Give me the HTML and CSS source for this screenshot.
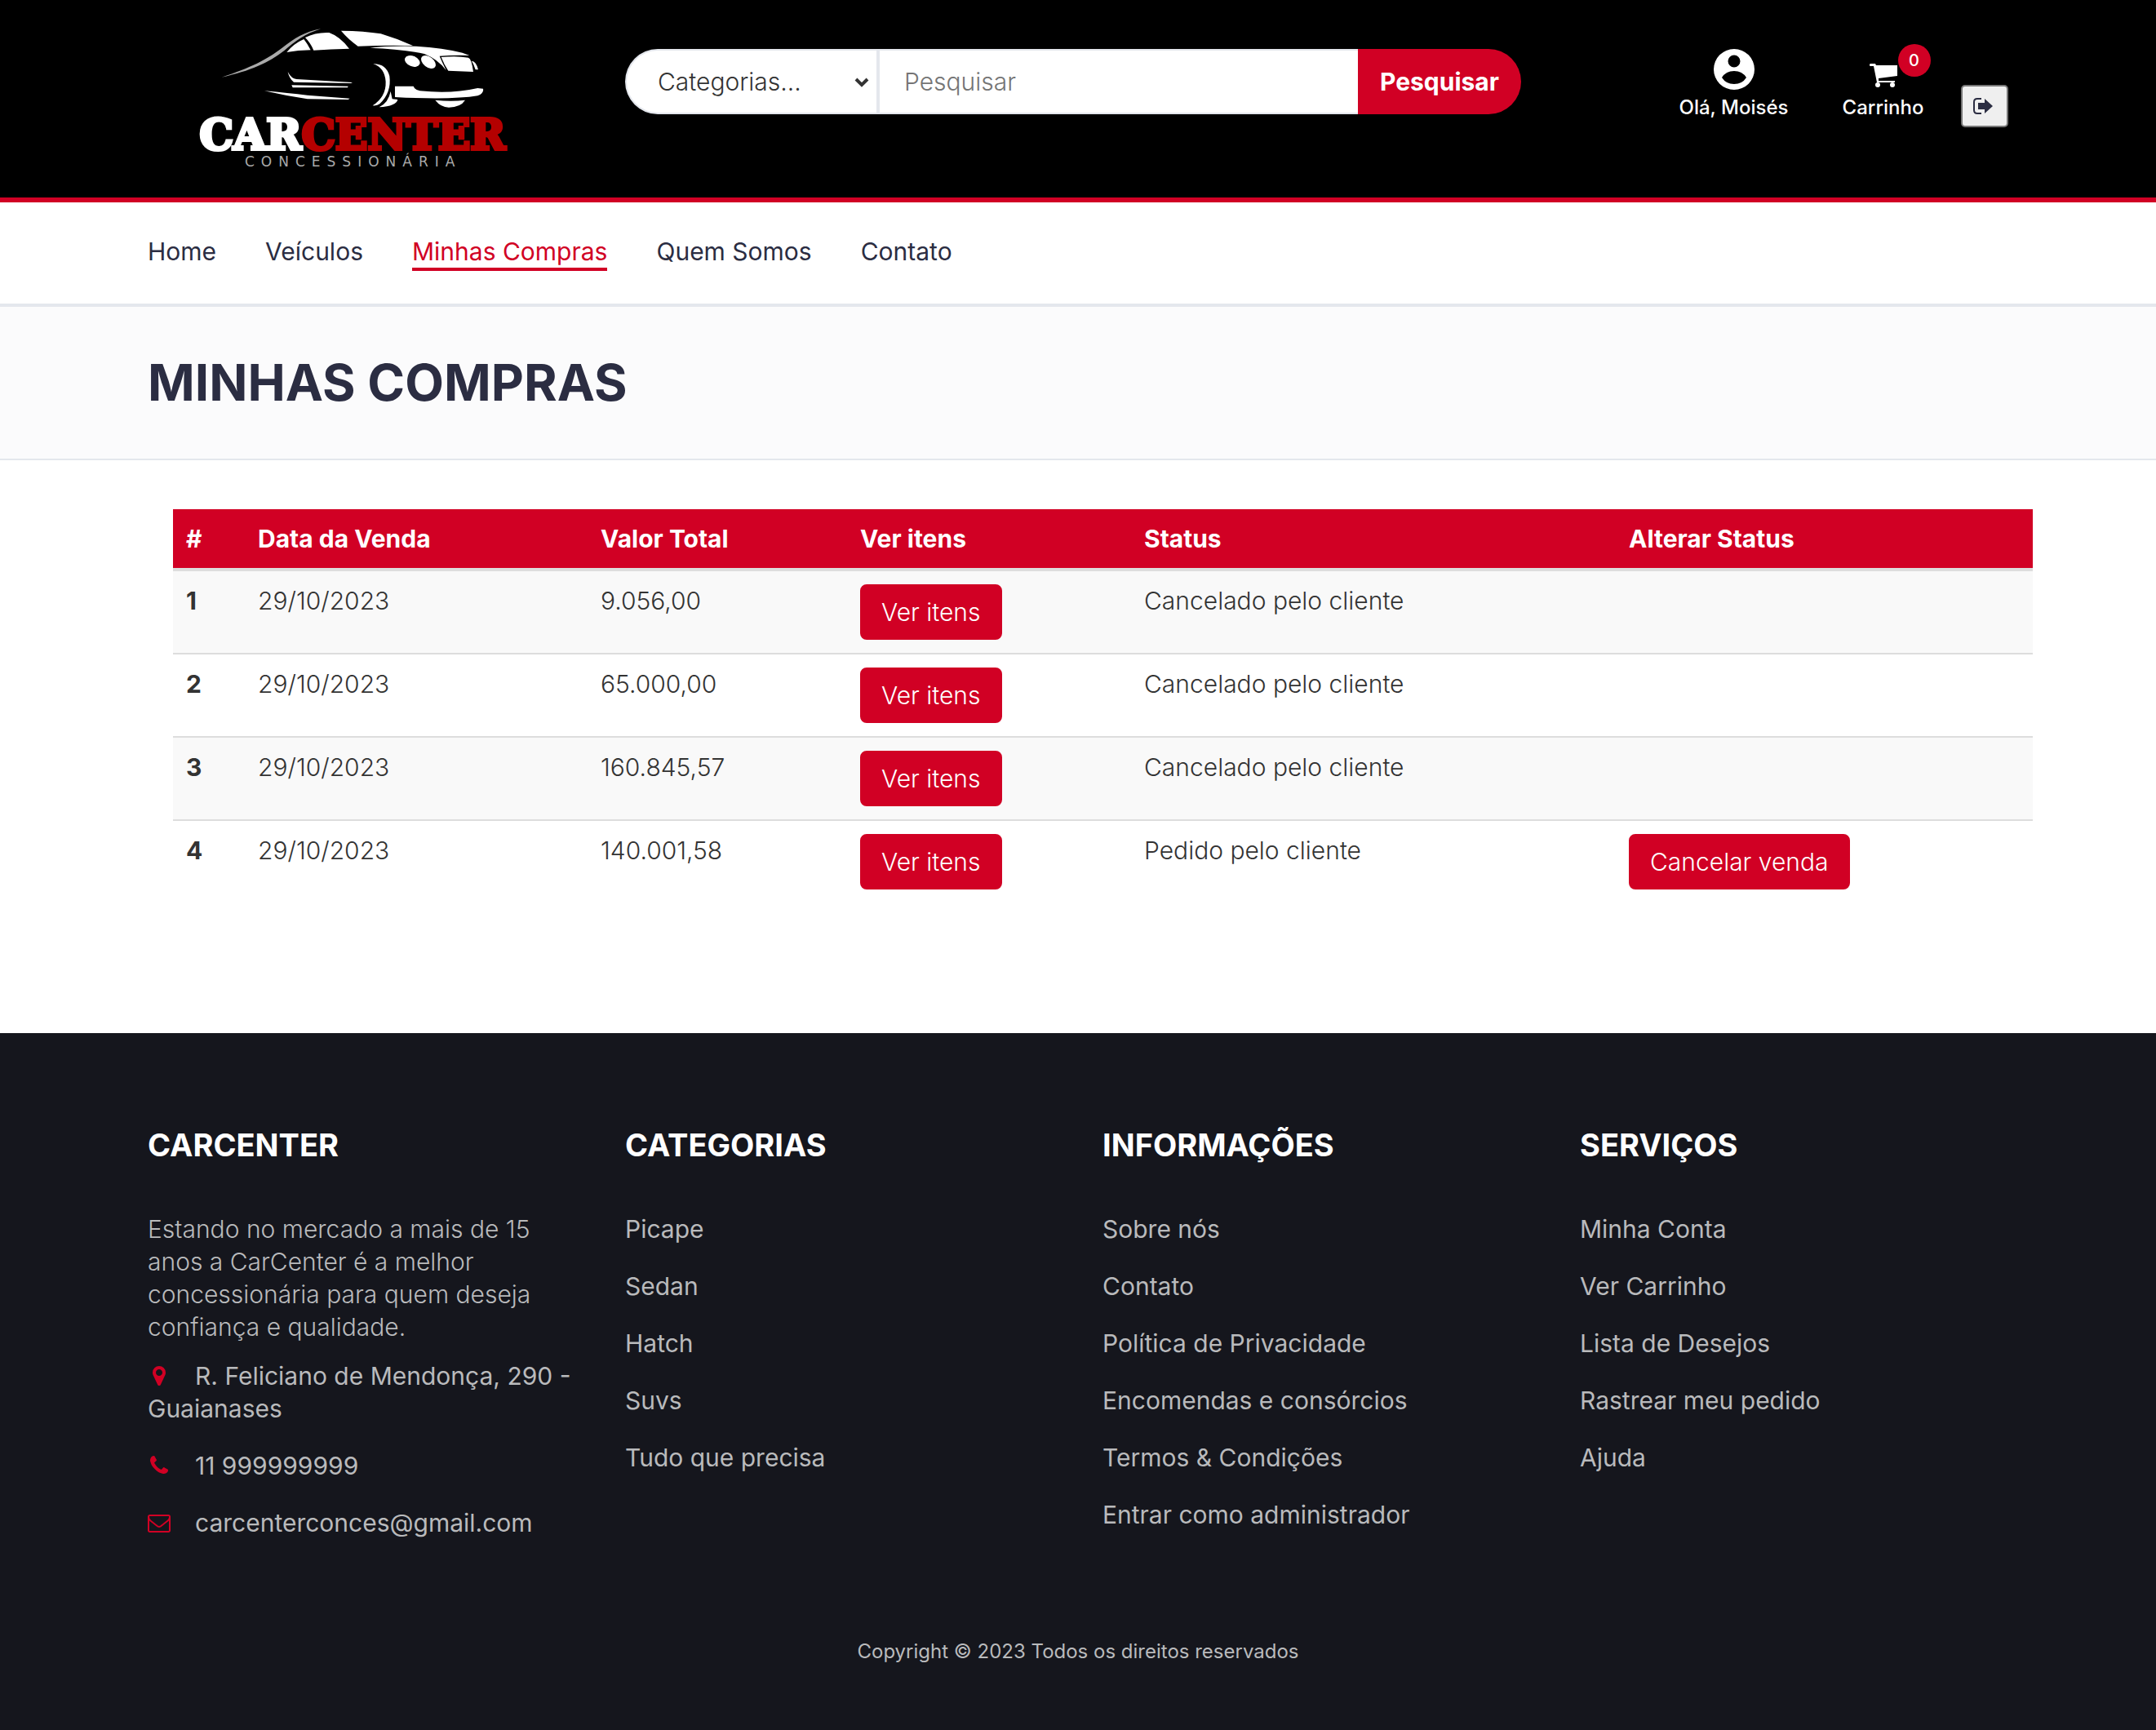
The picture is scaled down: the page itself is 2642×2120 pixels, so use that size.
FILE: index.html
```html
<!DOCTYPE html>
<html lang="pt-br">
<head>
<meta charset="utf-8">
<title>CarCenter - Minhas Compras</title>
<link rel="stylesheet" href="styles.css">
</head>
<body>
<header class="header">
  <div class="container header-grid">
    <a class="logo" href="#" aria-label="CarCenter Concessionária">
      <svg width="430" height="220" viewBox="220 20 430 220">
        <g transform="translate(220 20) scale(.3333)" fill="#fff">
          <path d="M155 224C260 190 320 160 375 118C420 82 460 56 520 46C462 64 425 92 385 126C325 172 262 200 155 224Z" fill="#aaa"/>
          <path d="M394 132Q420 100 457 84Q470 100 482 124Q436 124 394 132ZM462 78Q500 58 550 60Q590 74 624 119Q555 120 493 125Q482 98 462 78ZM594 53Q680 54 740 64Q800 82 858 108Q750 106 656 110Q620 84 594 53Z"/>
          <path d="M700 116Q760 108 870 110Q970 116 1040 134L1066 144Q1010 142 956 146Q966 170 980 198Q950 158 900 138Q820 120 700 116ZM1074 164Q1090 164 1098 196L1088 196Q1082 176 1074 164Z"/>
          <path d="M962 150Q1020 144 1062 152Q1074 156 1080 204L988 200Q974 180 962 150Z"/>
          <ellipse cx="856" cy="165" rx="29" ry="19" transform="rotate(22 856 165)"/>
          <ellipse cx="915" cy="168" rx="31" ry="19" transform="rotate(38 915 168)"/>
          <path d="M398 204Q412 230 430 231L636 243L630 246L420 242Q404 230 398 204ZM412 253L620 257L618 262L416 262ZM312 274Q400 282 470 290L626 302L620 306L470 304Q390 292 312 274Z"/>
          <path d="M712 175Q760 174 772 220Q780 280 736 322Q726 330 710 328Q760 296 758 240Q754 188 712 175ZM776 276L782 304L802 306Q798 330 734 334Q768 318 776 276Z"/>
          <path d="M792 257H860Q866 272 884 274Q1000 286 1096 264L1116 266Q1120 284 1096 292Q1000 308 792 297ZM940 308Q1000 314 1050 308Q1034 334 990 335Q960 334 940 308Z"/>
        </g>
        <text class="logo-name" x="432" y="183" text-anchor="middle"><tspan class="logo-car">CAR</tspan><tspan class="logo-center">CENTER</tspan></text>
        <text class="logo-tag" x="300" y="204">CONCESSIONÁRIA</text>
      </svg>
    </a>
    <form class="search">
      <span class="select-wrap">
        <select class="search-select" aria-label="Categorias">
          <option>Categorias...</option>
        </select>
        <svg class="chevron" width="18" height="12" viewBox="0 0 18 12"><path d="M2 2l7 7 7-7" fill="none" stroke="#333" stroke-width="4"/></svg>
      </span>
      <input class="search-input" type="text" placeholder="Pesquisar" aria-label="Pesquisar">
      <button class="search-btn" type="submit">Pesquisar</button>
    </form>
    <div class="account">
      <a class="account-item" href="#">
        <svg width="50" height="50" viewBox="0 0 50 50"><path fill="#fff" fill-rule="evenodd" d="M25 0a25 25 0 1 1 0 50a25 25 0 1 1 0-50zM25 7.500a7.500 7.500 0 1 0 0 15a7.500 7.500 0 1 0 0-15zM10 35Q15 43 25 43T40 35Q35 27 25 27T10 35z"/></svg>
        <span>Olá, Moisés</span>
      </a>
      <a class="account-item" href="#">
        <span class="cart-icon">
          <svg width="34" height="30" viewBox="0 0 34 30" fill="#fff"><path d="M1 0H7L8 2H34V15L11 18V21H31V23H9L5 3H1Q0 3 0 1.500T1 0z"/><circle cx="10" cy="26" r="3"/><circle cx="28" cy="26" r="3"/></svg>
          <span class="badge">0</span>
        </span>
        <span>Carrinho</span>
      </a>
      <button class="logout" type="button" aria-label="Sair">
        <svg width="26" height="20" viewBox="0 0 26 20"><path d="M11 1H6Q2 1 2 5V15Q2 19 6 19H11" fill="none" stroke="#2b2d42" stroke-width="2"/><path d="M7 6h8V1l10 9-10 9v-5H7z" fill="#2b2d42"/></svg>
      </button>
    </div>
  </div>
</header>

<nav class="nav">
  <div class="container nav-list">
    <a href="#">Home</a>
    <a href="#">Veículos</a>
    <a class="active" href="#">Minhas Compras</a>
    <a href="#">Quem Somos</a>
    <a href="#">Contato</a>
  </div>
</nav>

<section class="page-head">
  <div class="container"><h1>MINHAS COMPRAS</h1></div>
</section>

<main class="container main">
  <table class="orders">
    <colgroup><col class="c-id"><col class="c-date"><col class="c-total"><col class="c-items"><col class="c-status"><col></colgroup>
    <thead>
      <tr><th>#</th><th>Data da Venda</th><th>Valor Total</th><th>Ver itens</th><th>Status</th><th>Alterar Status</th></tr>
    </thead>
    <tbody>
      <tr><th>1</th><td>29/10/2023</td><td>9.056,00</td><td><button class="btn" type="button">Ver itens</button></td><td>Cancelado pelo cliente</td><td></td></tr>
      <tr><th>2</th><td>29/10/2023</td><td>65.000,00</td><td><button class="btn" type="button">Ver itens</button></td><td>Cancelado pelo cliente</td><td></td></tr>
      <tr><th>3</th><td>29/10/2023</td><td>160.845,57</td><td><button class="btn" type="button">Ver itens</button></td><td>Cancelado pelo cliente</td><td></td></tr>
      <tr><th>4</th><td>29/10/2023</td><td>140.001,58</td><td><button class="btn" type="button">Ver itens</button></td><td>Pedido pelo cliente</td><td><button class="btn" type="button">Cancelar venda</button></td></tr>
    </tbody>
  </table>
</main>

<footer class="footer">
  <div class="container footer-grid">
    <section>
      <h3>CARCENTER</h3>
      <p>Estando no mercado a mais de 15 anos a CarCenter é a melhor concessionária para quem deseja confiança e qualidade.</p>
      <ul class="links">
        <li><a href="#"><svg class="icon" viewBox="0 0 1792 1792"><path d="M1152 640q0-106-75-181t-181-75-181 75-75 181 75 181 181 75 181-75 75-181zm256 0q0 109-33 179l-364 774q-16 33-47.5 52t-67.500 19-67.500-19-46.500-52l-365-774q-33-70-33-179 0-212 150-362t362-150 362 150 150 362z"/></svg>R. Feliciano de Mendonça, 290 - Guaianases</a></li>
        <li><a href="#"><svg class="icon" viewBox="0 0 1792 1792"><path d="M1600 1240q0 27-10 70.500t-21 68.500q-21 50-122 106-94 51-186 51-27 0-53-3.500t-57.500-12.500-47-14.500-55.500-20.500-49-18q-98-35-175-83-127-79-264-216t-216-264q-48-77-83-175-3-9-18-49t-20.500-55.500-14.500-47-12.500-57.500-3.500-53q0-92 51-186 56-101 106-122 25-11 68.500-21t70.500-10q14 0 21 3 18 6 53 76 11 19 30 54t35 63.500 31 53.500q3 4 17.500 25t21.500 35.500 7 28.500q0 20-28.500 50t-62 55-62 53-28.500 46q0 9 5 22.500t8.500 20.500 14 24 11.500 19q76 137 174 235t235 174q2 1 19 11.500t24 14 20.500 8.500 22.500 5q18 0 46-28.500t53-62 55-62 50-28.500q14 0 28.500 7t35.500 21.500 25 17.500q25 15 53.500 31t63.500 35 54 30q70 35 76 53 3 7 3 21z"/></svg>11 999999999</a></li>
        <li><a href="#"><svg class="icon" viewBox="0 0 1792 1792"><path d="M1664 1504v-768q-32 36-69 66-268 206-426 338-51 43-83 67t-86.500 48.500-102.500 24.500h-2q-48 0-102.500-24.500t-86.500-48.500-83-67q-158-132-426-338-37-30-69-66v768q0 13 9.500 22.500t22.500 9.500h1472q13 0 22.500-9.500t9.500-22.500zm0-1051v-24.500l-.5-13-3-12.500-5.500-9-9-7.500-14-2.500h-1472q-13 0-22.500 9.500t-9.500 22.500q0 168 147 284 193 152 401 317 6 5 35 29.500t46 37.500 44.500 31.500 50.500 27.500 43 9h2q20 0 43-9t50.500-27.500 44.500-31.500 46-37.500 35-29.500q208-165 401-317 54-43 100.500-115.500t46.500-131.500zm128-37v1088q0 66-47 113t-113 47h-1472q-66 0-113-47t-47-113v-1088q0-66 47-113t113-47h1472q66 0 113 47t47 113z"/></svg>carcenterconces@gmail.com</a></li>
      </ul>
    </section>
    <section>
      <h3>CATEGORIAS</h3>
      <ul class="links">
        <li><a href="#">Picape</a></li>
        <li><a href="#">Sedan</a></li>
        <li><a href="#">Hatch</a></li>
        <li><a href="#">Suvs</a></li>
        <li><a href="#">Tudo que precisa</a></li>
      </ul>
    </section>
    <section>
      <h3>INFORMAÇÕES</h3>
      <ul class="links">
        <li><a href="#">Sobre nós</a></li>
        <li><a href="#">Contato</a></li>
        <li><a href="#">Política de Privacidade</a></li>
        <li><a href="#">Encomendas e consórcios</a></li>
        <li><a href="#">Termos &amp; Condições</a></li>
        <li><a href="#">Entrar como administrador</a></li>
      </ul>
    </section>
    <section>
      <h3>SERVIÇOS</h3>
      <ul class="links">
        <li><a href="#">Minha Conta</a></li>
        <li><a href="#">Ver Carrinho</a></li>
        <li><a href="#">Lista de Desejos</a></li>
        <li><a href="#">Rastrear meu pedido</a></li>
        <li><a href="#">Ajuda</a></li>
      </ul>
    </section>
  </div>
  <p class="copyright">Copyright © 2023 Todos os direitos reservados</p>
</footer>
</body>
</html>
```
FILE: styles.css
```css
* { box-sizing: border-box; }

body {
  margin: 0;
  background: #fff;
  color: #333;
  font: 300 30px/40px Inter, "Liberation Sans", sans-serif;
}

a { color: inherit; text-decoration: none; }
button, select, input { font: inherit; color: inherit; }
h1, h3, p, ul { margin: 0; padding: 0; }
ul { list-style: none; }
svg { display: block; }

.container { max-width: 2340px; margin: 0 auto; padding: 0 30px; }

/* Header */
.header { background: #000; border-bottom: 6px solid #d10024; }
.header-grid { display: grid; grid-template-columns: repeat(4, 1fr); column-gap: 60px; }
.logo { padding: 20px 0 2px 39px; }
.logo-name { font: 700 52px "DejaVu Serif", serif; stroke-width: 4px; }
.logo-car { fill: #fff; stroke: #fff; }
.logo-center { fill: #b40000; stroke: #b40000; }
.logo-tag { font: 400 17px "DejaVu Sans", sans-serif; letter-spacing: 8px; fill: #aaa; }

.search { grid-column: span 2; display: flex; height: 80px; margin: 60px 12px 0 0; }
.select-wrap { position: relative; width: 312px; }
.chevron { position: absolute; right: 13px; top: 35px; }
.search-select {
  appearance: none;
  width: 100%;
  height: 80px;
  padding: 0 40px 0 38px;
  background: #fff;
  border: 2px solid #e4e7ed;
  border-right-width: 4px;
  border-radius: 40px 0 0 40px;
}
.search-input {
  flex: 1;
  min-width: 0;
  padding: 0 30px;
  background: #fff;
  border: 2px solid #e4e7ed;
  border-width: 2px 0;
}
.search-input::placeholder { color: #757575; }
.search-btn {
  width: 200px;
  padding: 0;
  background: #d10024;
  border: 0;
  border-radius: 0 40px 40px 0;
  color: #fff;
  font-weight: 700;
}

.account { display: flex; justify-content: flex-end; padding-top: 60px; }
.account-item {
  display: flex;
  flex-direction: column;
  align-items: center;
  width: 183px;
  color: #fff;
  font-size: 24px;
  line-height: 44px;
  font-weight: 500;
}
.cart-icon { position: relative; display: block; height: 50px; padding-top: 18px; }
.badge {
  position: absolute;
  left: 35px;
  top: -6px;
  width: 40px;
  height: 40px;
  border-radius: 50%;
  background: #d10024;
  font-size: 20px;
  line-height: 40px;
  text-align: center;
}
.logout {
  display: flex;
  align-items: center;
  width: 58px;
  height: 52px;
  margin: 44px 0 0 4px;
  padding: 0 12px;
  background: #efefef;
  border: 2px solid #767676;
  border-radius: 5px;
}

/* Navigation */
.nav { border-bottom: 4px solid #e4e7ed; }
.nav-list { display: flex; gap: 60px; padding-top: 40px; padding-bottom: 40px; color: #2b2d42; font-weight: 400; }
.nav-list a { border-bottom: 4px solid transparent; }
.nav-list .active { border-color: #d10024; color: #d10024; }

/* Page title */
.page-head { background: #fbfbfc; border-bottom: 2px solid #e4e7ed; }
.page-head h1 { padding: 60px 0; color: #2b2d42; font-size: 62px; line-height: 66px; font-weight: 700; }

/* Orders */
.main { padding: 60px 0 160px 61px; }
.orders { width: 100%; table-layout: fixed; border-collapse: collapse; }
.c-id { width: 88px; }
.c-date { width: 420px; }
.c-total { width: 318px; }
.c-items { width: 348px; }
.c-status { width: 594px; }
.orders th, .orders td { padding: 16px; text-align: left; vertical-align: top; }
.orders th { font-weight: 700; }
.orders thead { background: #d10024; color: #fff; }
.orders tbody tr { border-top: 2px solid #ddd; }
.orders tbody tr:first-child { border-top: 4px solid #ddd; }
.orders tbody tr:nth-child(odd) { background: #f9f9f9; }
.btn {
  display: block;
  padding: 12px 24px;
  background: #d10024;
  border: 2px solid #d10024;
  border-radius: 8px;
  color: #fff;
}

/* Footer */
.footer { background: #15161d; color: #b9babc; }
.footer-grid { display: grid; grid-template-columns: repeat(4, 1fr); column-gap: 60px; padding-top: 116px; }
.footer h3 { margin-bottom: 62px; color: #fff; font-size: 38px; line-height: 42px; font-weight: 700; }
.footer-grid p { margin-bottom: 20px; }
.links { display: grid; row-gap: 30px; font-weight: 400; }
.icon { display: inline-block; width: 28px; height: 28px; margin-right: 30px; vertical-align: -3px; fill: #d10024; }
.copyright { padding: 118px 0 76px; font-size: 24px; font-weight: 400; text-align: center; }
```
